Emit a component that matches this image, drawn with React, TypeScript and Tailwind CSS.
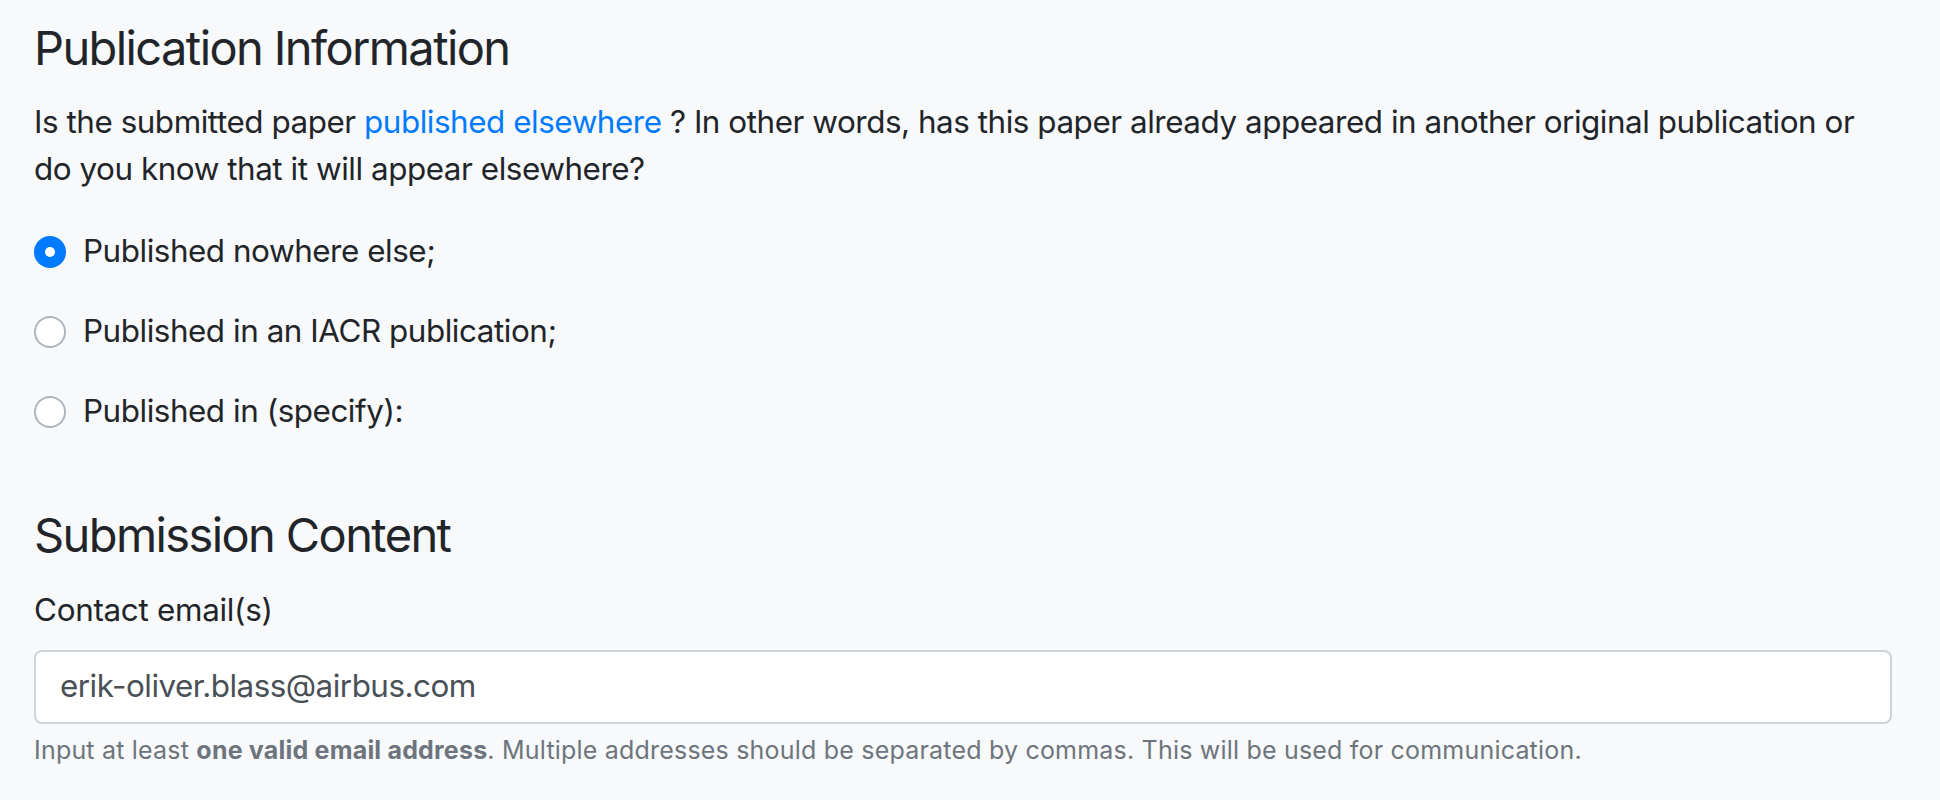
import React from "react";

function Radio({ checked, label }: { checked?: boolean; label: string }) {
  return (
    <label className="flex items-center h-[47px]">
      {checked ? (
        <span className="w-[32px] h-[32px] rounded-full bg-[#007bff] flex items-center justify-center shrink-0">
          <span className="w-[10px] h-[10px] rounded-full bg-white" />
        </span>
      ) : (
        <span className="w-[32px] h-[32px] rounded-full bg-white border-[2px] border-[#adb5bd] shrink-0" />
      )}
      <span className="ml-[17px] text-[31.4px] leading-[47px] tracking-[-0.45px] text-[#212529]">{label}</span>
    </label>
  );
}

export default function App() {
  return (
    <div className="min-h-screen w-full bg-[#f8f9fa]" style={{ fontFamily: "Inter, 'Noto Sans', sans-serif" }}>
      <div className="w-[1858px] ml-[34px] pt-[20px]">
        <h4 className="text-[47px] leading-[56.4px] font-normal tracking-[-1.6px] text-[#212529]">Publication Information</h4>
        <p className="mt-[23px] text-[31.4px] leading-[47px] tracking-[-0.45px] text-[#212529]">
          Is the submitted paper <a className="text-[#007bff]">published elsewhere</a> ? In other words, has this paper already appeared in another original publication or do you know that it will appear elsewhere?
        </p>
        <div className="mt-[35px] flex flex-col gap-[33px]">
          <Radio checked label="Published nowhere else;" />
          <Radio label="Published in an IACR publication;" />
          <Radio label="Published in (specify):" />
        </div>
        <h4 className="mt-[72px] text-[47px] leading-[56.4px] font-normal tracking-[-1.6px] text-[#212529]">Submission Content</h4>
        <label className="block mt-[23px] text-[31.4px] leading-[47px] tracking-[-0.3px] text-[#212529]">Contact email(s)</label>
        <div className="mt-[16px] h-[74px] w-full bg-white border-[2px] border-[#ced4da] rounded-[8px] flex items-center px-[24px]">
          <span className="text-[31.4px] leading-[47px] tracking-[-0.5px] text-[#495057]">erik-oliver.blass@airbus.com</span>
        </div>
        <p className="mt-[8px] text-[25px] leading-[37.6px] tracking-[0.2px] text-[#6c757d]">
          Input at least <b className="font-bold">one valid email address</b>. Multiple addresses should be separated by commas. This will be used for communication.
        </p>
      </div>
    </div>
  );
}
